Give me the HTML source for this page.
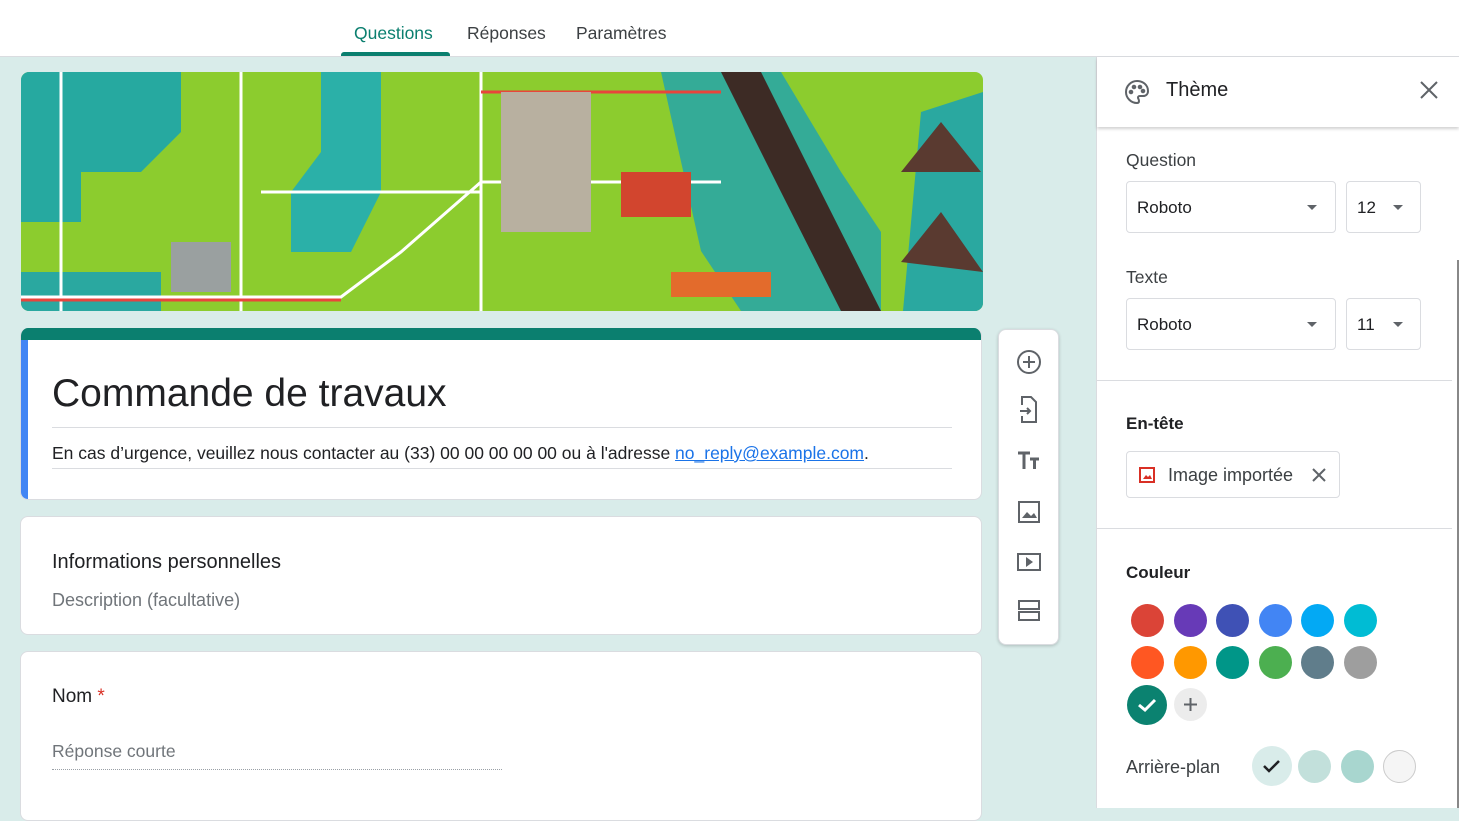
<!DOCTYPE html><html><head><meta charset="utf-8"><style>
*{box-sizing:border-box;margin:0;padding:0}
body{width:1459px;height:808px;overflow:hidden;background:#d9ecea;font-family:"Liberation Sans",sans-serif;color:#202124;position:relative}
.top{position:absolute;left:0;top:0;width:1459px;height:57px;background:#fff;border-bottom:1px solid #dadce0}
.tab{position:absolute;top:23px;font-size:17.5px;color:#3c4043}
.card{position:absolute;background:#fff;border-radius:8px;border:1px solid #dadce0}
.a{position:absolute}
.panel{position:absolute;left:1096px;top:57px;width:363px;height:751px;background:#fff;border-left:1px solid #dadce0}
.sel{position:absolute;border:1px solid #dadce0;border-radius:4px;height:52px;font-size:17px;padding:16px 10px;color:#202124}
.sel i{position:absolute;top:23px;width:0;height:0;border-left:5px solid transparent;border-right:5px solid transparent;border-top:5px solid #5f6368}
.dot{position:absolute;width:33px;height:33px;border-radius:50%}
</style></head><body>
<div class="top">
<div class="tab" style="left:354px;color:#0b7f6f;font-weight:bold;font-weight:500">Questions</div>
<div class="a" style="left:341px;top:52px;width:109px;height:4px;background:#0b7f6f;border-radius:3px 3px 0 0"></div>
<div class="tab" style="left:467px">Réponses</div>
<div class="tab" style="left:576px">Paramètres</div>
</div>
<svg class="a" style="left:21px;top:72px;border-radius:8px" width="962" height="239">
<rect width="962" height="239" fill="#8ccc2e"/>
<path d="M0 0h160v60l-40 40h-60v50H0z" fill="#26a9a0"/>
<path d="M300 0h60v120l-30 60h-60v-60l30-40z" fill="#2bb0a8"/>
<path d="M0 200h140v39H0z" fill="#2aa8a0"/>
<path d="M640 0h120l60 100 40 60v79H720l-40-60z" fill="#2aa7a3" opacity=".9"/>
<path d="M700 0h40l60 120 60 119h-40L760 120z" fill="#3d2b25"/>
<path d="M900 40l62-20v219h-80z" fill="#2aa8a0"/>
<path d="M880 100l40-50 40 50zM880 190l40-50 42 60z" fill="#5a3a30"/>
<path d="M40 0L40 239M220 0V239M460 0V239M0 225H320L380 180L460 110H700M240 120H460" stroke="#fff" stroke-width="3" fill="none"/>
<path d="M0 228H320M460 20H700" stroke="#e8453c" stroke-width="3" fill="none"/>
<rect x="480" y="20" width="90" height="140" fill="#b8b0a0"/>
<rect x="600" y="100" width="70" height="45" fill="#d2452e"/>
<rect x="150" y="170" width="60" height="50" fill="#9aa0a0"/>
<rect x="650" y="200" width="100" height="25" fill="#e36b2c"/>
</svg>
<div class="card" style="left:20px;top:328px;width:962px;height:172px;overflow:hidden;border-top:none">
<div class="a" style="left:0;top:0;width:962px;height:12px;background:#0b7f6f"></div>
<div class="a" style="left:0;top:12px;width:7px;height:160px;background:#4285f4"></div>
<div class="a" style="left:31px;top:44px;font-size:39px">Commande de travaux</div>
<div class="a" style="left:31px;top:99px;width:900px;border-top:1px solid #dadce0"></div>
<div class="a" style="left:31px;top:115px;font-size:17.5px">En cas d’urgence, veuillez nous contacter au (33) 00 00 00 00 00 ou à l'adresse <u style="color:#1a73e8">no_reply@example.com</u>.</div>
<div class="a" style="left:31px;top:140px;width:900px;border-top:1px solid #dadce0"></div>
</div>
<div class="card" style="left:20px;top:516px;width:962px;height:119px">
<div class="a" style="left:31px;top:34px;font-size:20px">Informations personnelles</div>
<div class="a" style="left:31px;top:73px;font-size:18px;color:#70757a">Description (facultative)</div>
</div>
<div class="card" style="left:20px;top:651px;width:962px;height:170px">
<div class="a" style="left:31px;top:34px;font-size:19px">Nom <span style="color:#d93025">*</span></div>
<div class="a" style="left:31px;top:89px;font-size:17.5px;color:#70757a">Réponse courte</div>
<div class="a" style="left:31px;top:117px;width:450px;border-top:1px dotted #9aa0a6"></div>
</div>
<div class="card" style="left:998px;top:329px;width:61px;height:316px;box-shadow:0 1px 3px rgba(0,0,0,.2)">
<svg class="a" style="left:17px;top:19px" width="26" height="280" fill="none" stroke="#5f6368" stroke-width="2">
<circle cx="13" cy="13" r="11"/><path d="M13 7v12M7 13h12"/>
<path d="M6 56v-8h9l5 5v20H6v-6M4 62h10M11 59l3 3-3 3"/>
<path d="M2 104h12M8 104v16M14 110h9M18.5 110v10" stroke-width="3"/>
<rect x="3" y="153" width="20" height="20"/><path d="M6 169l5-6 4 4 3-3 3 5z" fill="#5f6368" stroke="none"/>
<rect x="2" y="205" width="22" height="16"/><path d="M10 208v10l7-5z" fill="#5f6368" stroke="none"/>
<rect x="3" y="252" width="20" height="8"/><rect x="3" y="263" width="20" height="8"/>
</svg>
</div>
<div class="panel">
<div class="a" style="left:0;top:0;width:362px;height:70px;box-shadow:0 2px 3px rgba(0,0,0,.18);background:#fff"></div>
<svg class="a" style="left:27px;top:22px" width="26" height="26" fill="none" stroke="#5f6368" stroke-width="2"><path d="M13 2C7 2 2 7 2 13s5 11 11 11c1.5 0 2-1 2-2 0-2-1-2-1-3.5 0-1 1-1.5 2-1.5h3c3 0 5-2 5-5 0-6-5-10-11-10z"/><circle cx="7" cy="13" r="1.3" fill="#5f6368"/><circle cx="10" cy="8" r="1.3" fill="#5f6368"/><circle cx="16" cy="8" r="1.3" fill="#5f6368"/><circle cx="19" cy="12" r="1.3" fill="#5f6368"/></svg>
<div class="a" style="left:69px;top:22px;font-size:20px">Thème</div>
<svg class="a" style="left:323px;top:24px" width="18" height="18" stroke="#5f6368" stroke-width="2"><path d="M1 1l16 16M17 1L1 17"/></svg>
<div class="a" style="left:29px;top:93px;font-size:17.5px;color:#3c4043">Question</div>
<div class="sel" style="left:29px;top:124px;width:210px">Roboto<i style="left:180px"></i></div>
<div class="sel" style="left:249px;top:124px;width:75px">12<i style="left:46px"></i></div>
<div class="a" style="left:29px;top:210px;font-size:17.5px;color:#3c4043">Texte</div>
<div class="sel" style="left:29px;top:241px;width:210px">Roboto<i style="left:180px"></i></div>
<div class="sel" style="left:249px;top:241px;width:75px">11<i style="left:46px"></i></div>
<div class="a" style="left:0;top:323px;width:355px;border-top:1px solid #dadce0"></div>
<div class="a" style="left:29px;top:357px;font-size:17px;font-weight:bold">En-tête</div>
<div class="a" style="left:29px;top:394px;width:214px;height:47px;border:1px solid #dadce0;border-radius:4px">
<svg class="a" style="left:12px;top:15px" width="16" height="16"><rect x="1" y="1" width="14" height="14" fill="none" stroke="#d93025" stroke-width="2"/><path d="M4 12l3-4 2 2 2-2 2 4z" fill="#d93025"/></svg>
<div class="a" style="left:41px;top:13px;font-size:18px;color:#3c4043">Image importée</div>
<svg class="a" style="left:185px;top:16px" width="14" height="14" stroke="#5f6368" stroke-width="2"><path d="M1 1l12 12M13 1L1 13"/></svg>
</div>
<div class="a" style="left:0;top:471px;width:355px;border-top:1px solid #dadce0"></div>
<div class="a" style="left:29px;top:506px;font-size:17px;font-weight:bold">Couleur</div>
<div class="dot" style="left:34px;top:547px;background:#db4437"></div>
<div class="dot" style="left:77px;top:547px;background:#673ab7"></div>
<div class="dot" style="left:119px;top:547px;background:#3f51b5"></div>
<div class="dot" style="left:162px;top:547px;background:#4285f4"></div>
<div class="dot" style="left:204px;top:547px;background:#03a9f4"></div>
<div class="dot" style="left:247px;top:547px;background:#00bcd4"></div>
<div class="dot" style="left:34px;top:589px;background:#ff5722"></div>
<div class="dot" style="left:77px;top:589px;background:#ff9800"></div>
<div class="dot" style="left:119px;top:589px;background:#009688"></div>
<div class="dot" style="left:162px;top:589px;background:#4caf50"></div>
<div class="dot" style="left:204px;top:589px;background:#607d8b"></div>
<div class="dot" style="left:247px;top:589px;background:#9e9e9e"></div>
<div class="dot" style="left:30px;top:628px;width:40px;height:40px;background:#0b8270"><svg width="40" height="40"><path d="M12 20l6 5 10-10" stroke="#fff" stroke-width="3" fill="none"/></svg></div>
<div class="dot" style="left:77px;top:631px;background:#ececec"><svg width="33" height="33"><path d="M16.5 10v13M10 16.5h13" stroke="#5f6368" stroke-width="2"/></svg></div>
<div class="a" style="left:29px;top:700px;font-size:18px;color:#3c4043">Arrière-plan</div>
<div class="dot" style="left:155px;top:689px;width:40px;height:40px;background:#d9ecea"><svg width="40" height="40"><path d="M12 20l5 5 10-10" stroke="#202124" stroke-width="2.5" fill="none"/></svg></div>
<div class="dot" style="left:201px;top:693px;background:#c2e0db"></div>
<div class="dot" style="left:244px;top:693px;background:#a8d6cf"></div>
<div class="dot" style="left:286px;top:693px;background:#f5f5f5;border:1px solid #ccc"></div>
</div>
<div class="a" style="left:1457px;top:260px;width:2px;height:548px;background:#888"></div>
</body></html>
